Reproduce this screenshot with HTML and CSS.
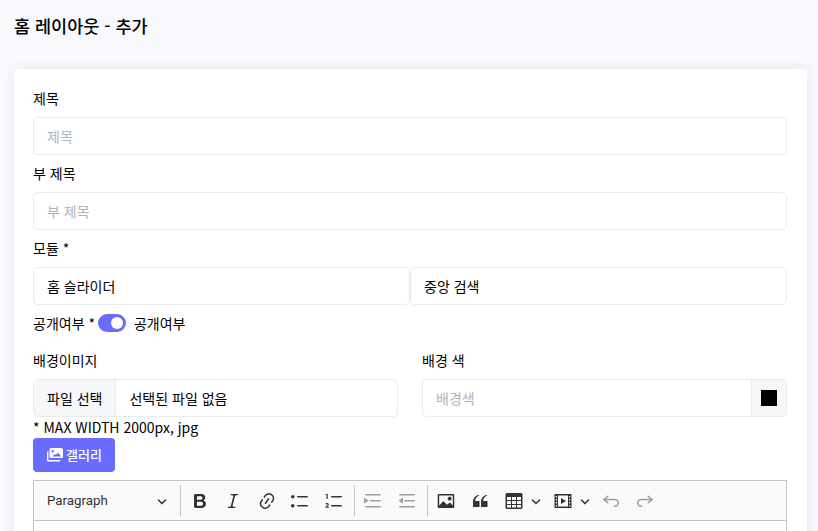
FILE: index.html
```html
<!DOCTYPE html>
<html lang="ko">
<head>
<meta charset="utf-8">
<title>홈 레이아웃 - 추가</title>
<link rel="stylesheet" href="styles.css">
</head>
<body>
<h1 class="page-title">홈 레이아웃 - 추가</h1>
<main class="card">
  <div class="field">
    <label class="label">제목</label>
    <input class="control" type="text" placeholder="제목">
  </div>
  <div class="field">
    <label class="label">부 제목</label>
    <input class="control" type="text" placeholder="부 제목">
  </div>
  <div class="field">
    <label class="label">모듈 *</label>
    <div class="split">
      <div class="control">홈 슬라이더</div>
      <div class="control">중앙 검색</div>
    </div>
  </div>
  <div class="switch-row">
    <span>공개여부 *</span>
    <span class="switch"><span class="knob"></span></span>
    <span>공개여부</span>
  </div>
  <div class="columns">
    <div class="col">
      <label class="label">배경이미지</label>
      <div class="control group">
        <span class="addon addon-left">파일 선택</span>
        <span class="group-text">선택된 파일 없음</span>
      </div>
    </div>
    <div class="col">
      <label class="label">배경 색</label>
      <div class="control group">
        <span class="group-text placeholder">배경색</span>
        <span class="addon addon-right"><span class="swatch"></span></span>
      </div>
    </div>
  </div>
  <div class="hint">* MAX WIDTH 2000px, jpg</div>
  <button class="gallery" type="button">
    <svg class="gallery-icon" viewBox="0 0 16 14"><path fill="currentColor" d="M4 0h10.5A1.5 1.5 0 0 1 16 1.5v7a1.5 1.5 0 0 1-1.500 1.500H4a1.500 1.500 0 0 1-1.500-1.500v-7A1.500 1.500 0 0 1 4 0zm1.300 8.500h8.900L11 4.700 8.700 7 7.600 5.900zM5.700 2A1.200 1.200 0 1 0 5.700 4.400 1.200 1.200 0 0 0 5.700 2z" fill-rule="evenodd"/><path fill="currentColor" d="M0 4.500A1.500 1.500 0 0 1 1.400 3v8.200c0 .5.400.9.900.9h11.200a1.500 1.500 0 0 1-1.400 1.400H1.500A1.500 1.500 0 0 1 0 12z"/></svg>
    <span>갤러리</span>
  </button>
  <div class="editor">
    <div class="toolbar">
      <div class="heading-select">
        <span>Paragraph</span>
        <svg class="caret" viewBox="0 0 10 10"><path d="M.941 4.523a.75.75 0 1 1 1.06-1.06l3.006 3.005 3.005-3.005a.75.75 0 1 1 1.06 1.06l-3.549 3.55a.75.75 0 0 1-1.168-.136L.941 4.523z"/></svg>
      </div>
      <span class="sep"></span>
      <span class="tool"><svg viewBox="0 0 20 20"><path d="M10.187 17H5.773c-.637 0-1.092-.138-1.364-.415-.273-.277-.409-.718-.409-1.323V4.738c0-.617.14-1.062.419-1.332.279-.27.73-.406 1.354-.406h4.68c.69 0 1.288.041 1.793.124.506.083.96.242 1.36.478.341.197.644.447.906.75a3.262 3.262 0 0 1 .808 2.162c0 1.401-.722 2.426-2.167 3.075C15.05 10.175 16 11.315 16 13.01a3.756 3.756 0 0 1-2.296 3.504 6.1 6.1 0 0 1-1.517.377c-.571.073-1.238.11-2 .11zm-.217-6.217H7v4.087h3.069c1.977 0 2.965-.69 2.965-2.072 0-.707-.256-1.22-.768-1.537-.512-.319-1.277-.478-2.296-.478zM7 5.13v3.619h2.606c.729 0 1.292-.067 1.69-.2a1.6 1.6 0 0 0 .91-.765c.165-.267.247-.566.247-.897 0-.707-.26-1.176-.778-1.409-.519-.232-1.31-.348-2.375-.348H7z"/></svg></span>
      <span class="tool"><svg viewBox="0 0 20 20"><path d="m9.586 14.633.021.004c-.036.335.095.655.393.962.082.083.173.15.274.201h1.474a.6.6 0 1 1 0 1.2H5.304a.6.6 0 0 1 0-1.2h1.15c.474-.07.809-.182 1.005-.334.157-.122.291-.32.404-.597l2.416-9.55a1.053 1.053 0 0 0-.281-.823 1.12 1.12 0 0 0-.442-.296H8.15a.6.6 0 0 1 0-1.2h6.443a.6.6 0 1 1 0 1.200h-1.195c-.376.056-.65.155-.823.296-.215.175-.423.439-.623.79l-2.366 9.347z"/></svg></span>
      <span class="tool"><svg viewBox="0 0 20 20"><path d="m11.077 15 .991-1.416a.75.75 0 1 1 1.229.86l-1.148 1.64a.748.748 0 0 1-.217.206 5.251 5.251 0 0 1-8.503-5.955.741.741 0 0 1 .12-.274l1.147-1.639a.75.75 0 1 1 1.228.86L4.933 10.7l.006.003a3.75 3.75 0 0 0 6.132 4.294l.006.004zm5.494-5.335a.748.748 0 0 1-.12.274l-1.147 1.639a.75.75 0 1 1-1.228-.86l.86-1.23a3.75 3.75 0 0 0-6.144-4.301l-.86 1.229a.75.75 0 0 1-1.229-.86l1.148-1.64a.748.748 0 0 1 .217-.206 5.251 5.251 0 0 1 8.503 5.955zm-4.563-2.532a.75.75 0 0 1 .184 1.045l-3.155 4.505a.75.75 0 1 1-1.229-.86l3.155-4.506a.75.75 0 0 1 1.045-.184z"/></svg></span>
      <span class="tool"><svg viewBox="0 0 20 20"><path d="M7 5.75c0 .414.336.75.75.75h9.5a.75.75 0 1 0 0-1.5h-9.5a.75.75 0 0 0-.75.75zm-6 0C1 4.784 1.777 4 2.75 4c.966 0 1.75.777 1.75 1.750 0 .966-.777 1.75-1.75 1.75C1.784 7.5 1 6.723 1 5.75zm6 9c0 .414.336.75.75.75h9.5a.75.75 0 1 0 0-1.5h-9.5a.75.75 0 0 0-.75.75zm-6 0c0-.966.777-1.75 1.75-1.75.966 0 1.75.777 1.75 1.75 0 .966-.777 1.75-1.750 1.750-.966 0-1.75-.777-1.75-1.75z"/></svg></span>
      <span class="tool"><svg viewBox="0 0 20 20"><path d="M7 5.750c0 .414.336.75.75.75h9.5a.75.75 0 1 0 0-1.500h-9.500a.75.75 0 0 0-.75.75zm0 9c0 .414.336.75.75.75h9.500a.75.75 0 1 0 0-1.500h-9.500a.75.75 0 0 0-.75.75z"/><path d="M2.200 2.900h1.500v5H2.500V4H1.600V3.300z"/><path d="M1.300 13.300c.2-1 1-1.400 1.800-1.400 1 0 1.700.6 1.700 1.500 0 .7-.4 1.200-1 1.700l-.8.700h1.900v1H1.300v-.9l1.600-1.500c.5-.4.700-.7.700-1 0-.3-.2-.5-.5-.5-.4 0-.6.200-.7.600z"/></svg></span>
      <span class="sep"></span>
      <span class="tool off"><svg viewBox="0 0 20 20"><path d="M2 3.75c0 .414.336.75.75.75h14.5a.75.75 0 1 0 0-1.5H2.750a.75.75 0 0 0-.75.75zm5 6c0 .414.336.75.75.75h9.500a.75.75 0 1 0 0-1.500h-9.500a.75.75 0 0 0-.75.75zM2.750 16.500h14.500a.75.75 0 1 0 0-1.500H2.750a.75.75 0 1 0 0 1.500zM1.632 6.950 5.020 9.358a.4.4 0 0 1-.013.661l-3.390 2.207A.4.4 0 0 1 1 11.892V7.275a.4.4 0 0 1 .632-.326z"/></svg></span>
      <span class="tool off"><svg viewBox="0 0 20 20"><path d="M2 3.750c0 .414.336.75.75.75h14.500a.75.75 0 1 0 0-1.500H2.750a.75.75 0 0 0-.75.75zm5 6c0 .414.336.75.75.75h9.500a.75.75 0 1 0 0-1.500h-9.500a.75.75 0 0 0-.75.75zM2.750 16.500h14.500a.75.75 0 1 0 0-1.500H2.750a.75.750 0 1 0 0 1.500zM5.370 6.950 1.980 9.358a.4.4 0 0 0 .013.661l3.390 2.207A.4.4 0 0 0 6 11.892V7.275a.4.4 0 0 0-.63-.326z"/></svg></span>
      <span class="sep"></span>
      <span class="tool"><svg viewBox="0 0 20 20"><path d="M6.910 10.540c.26-.23.64-.21.88.03l3.360 3.140 2.230-2.060a.64.64 0 0 1 .87 0l2.520 2.970V4.500H3.200v10.120l3.710-4.080zm10.270-7.510c.6 0 1.090.47 1.090 1.050v11.840c0 .59-.49 1.060-1.090 1.060H2.790c-.6 0-1.090-.47-1.090-1.060V4.080c0-.58.49-1.050 1.100-1.050h14.380zm-5.220 5.560a1.960 1.960 0 1 1 3.400-1.960 1.960 1.960 0 0 1-3.400 1.960z"/></svg></span>
      <span class="tool"><svg viewBox="0 0 20 20"><path d="M3 10.423a6.500 6.500 0 0 1 6.056-6.408l.038.67C6.448 5.423 5.354 7.663 5.220 10H9c.552 0 .5.432.5.986v4.511c0 .554-.448.503-1 .503h-5c-.552 0-.5-.449-.5-1.003v-4.574zm8 0a6.500 6.500 0 0 1 6.056-6.408l.038.67c-2.646.739-3.740 2.979-3.873 5.315H17c.552 0 .5.432.5.986v4.511c0 .554-.448.503-1 .503h-5c-.552 0-.5-.449-.5-1.003v-4.574z"/></svg></span>
      <span class="tool wide"><svg viewBox="0 0 20 20"><path fill-rule="evenodd" d="M3 2h14a1.500 1.500 0 0 1 1.500 1.500v13A1.500 1.500 0 0 1 17 18H3a1.500 1.500 0 0 1-1.500-1.500v-13A1.500 1.500 0 0 1 3 2zm0 4v3h4V6zm5 0v3h4V6zm5 0v3h4V6zM3 10v3h4v-3zm5 0v3h4v-3zm5 0v3h4v-3zM3 14v2.500h4V14zm5 0v2.500h4V14zm5 0v2.500h4V14z"/></svg><svg class="caret-small" viewBox="0 0 10 10"><path d="M.941 4.523a.75.75 0 1 1 1.06-1.06l3.006 3.005 3.005-3.005a.75.75 0 1 1 1.06 1.06l-3.549 3.55a.75.75 0 0 1-1.168-.136L.941 4.523z"/></svg></span>
      <span class="tool wide"><svg viewBox="0 0 20 20"><path fill-rule="evenodd" d="M1.500 3h17v14h-17zM5 4.500v11h10v-11zM2.800 5v1.500h1.200V5zm0 3v1.500h1.200V8zm0 3v1.500h1.200V11zm0 3v1.500h1.200V14zM16 5v1.500h1.200V5zm0 3v1.500h1.200V8zm0 3v1.500h1.200V11zm0 3v1.500h1.200V14zM8 7l5 3-5 3z"/></svg><svg class="caret-small" viewBox="0 0 10 10"><path d="M.941 4.523a.75.75 0 1 1 1.06-1.06l3.006 3.005 3.005-3.005a.75.75 0 1 1 1.06 1.06l-3.549 3.55a.75.75 0 0 1-1.168-.136L.941 4.523z"/></svg></span>
      <span class="tool off"><svg viewBox="0 0 20 20"><path d="m5.042 9.367 2.189 1.837a.75.75 0 0 1-.965 1.149l-3.788-3.180a.747.747 0 0 1-.21-.284.75.75 0 0 1 .17-.945L6.230 4.762a.75.75 0 1 1 .964 1.150L4.863 7.866h8.917A.75.75 0 0 1 14 7.900a4 4 0 1 1-1.477 7.718l.344-1.489a2.500 2.500 0 1 0 1.094-4.730l.008-.032H5.042z"/></svg></span>
      <span class="tool off"><svg viewBox="0 0 20 20"><path d="m14.958 9.367-2.189 1.837a.75.75 0 0 0 .965 1.149l3.788-3.180a.747.747 0 0 0 .21-.284.75.75 0 0 0-.17-.945L13.770 4.762a.75.75 0 1 0-.964 1.150l2.331 1.955H6.220A.75.75 0 0 0 6 7.900a4 4 0 1 0 1.477 7.718l-.344-1.489A2.500 2.500 0 1 1 6.039 9.400l-.008-.032h8.927z"/></svg></span>
    </div>
    <div class="editor-body"></div>
  </div>
</main>
</body>
</html>
```
FILE: styles.css
```css
* { box-sizing: border-box; }
html, body { height: 100%; }
body {
  margin: 0;
  overflow: hidden;
  background: #f8f9fc;
  color: #000;
  font: 14px/20px "Noto Sans CJK KR", "Noto Sans", sans-serif;
  padding: 0 11px 0 14px;
}
.page-title {
  margin: 0;
  padding-top: 14px;
  height: 69px;
  font-size: 17.5px;
  line-height: 24px;
  font-weight: 500;
}
.card {
  background: #fff;
  border-radius: 4px;
  box-shadow: 0 0 12px rgba(60, 70, 120, .1);
  padding: 19px 20px 0 19px;
  height: 600px;
}
.field { margin-bottom: 8px; }
.label { display: block; margin-bottom: 9px; line-height: 20px; }
.control {
  display: block;
  width: 100%;
  height: 38px;
  padding: 0 13px;
  border: 1px solid #e9ecef;
  border-radius: 5px;
  background: #fff;
  color: #000;
  font: inherit;
  line-height: 36px;
  outline: none;
}
.control::placeholder, .placeholder { color: #adb5bd; opacity: 1; }
.split { display: flex; }
.split .control { flex: 1 1 0; min-width: 0; }
.switch-row { display: flex; align-items: center; height: 20px; margin-top: 8px; }
.switch {
  width: 28px;
  height: 18px;
  margin: 0 8px 0 3px;
  border-radius: 9px;
  background: #696cff;
  display: flex;
  align-items: center;
  justify-content: flex-end;
  padding-right: 3px;
}
.knob { width: 12px; height: 12px; border-radius: 50%; background: #fff; }
.columns { display: grid; grid-template-columns: 1fr 1fr; gap: 24px; margin-top: 17px; }
.group { display: flex; padding: 0; overflow: hidden; }
.addon { background: #f6f7f9; flex: none; height: 100%; }
.addon-left { padding: 0 13px; border-right: 1px solid #e9ecef; }
.addon-right { width: 35px; border-left: 1px solid #e9ecef; display: flex; align-items: center; justify-content: center; }
.group-text { flex: 1; padding: 0 13px; min-width: 0; }
.swatch { width: 16px; height: 16px; background: #000; }
.hint { margin-top: 0; line-height: 21px; }
.gallery {
  display: flex;
  align-items: center;
  gap: 3px;
  width: 82px;
  height: 34px;
  padding: 0 0 0 14px;
  border: 0;
  border-radius: 4px;
  background: #696cff;
  color: #fff;
  white-space: nowrap;
  font: 500 13px/20px "Noto Sans CJK KR", sans-serif;
}
.gallery-icon { width: 16px; height: 14px; flex: none; }
.editor { margin-top: 8px; border: 1px solid #c4c4c4; }
.toolbar {
  display: flex;
  align-items: center;
  height: 40px;
  padding: 0 0 0 13px;
  background: #fafafa;
  border-bottom: 1px solid #c4c4c4;
  color: #333;
  font-family: Roboto, sans-serif;
  font-size: 13.33px;
}
.toolbar svg { fill: currentColor; }
.heading-select {
  width: 130px;
  display: flex;
  align-items: center;
  justify-content: space-between;
  padding-right: 10px;
  flex: none;
}
.caret { width: 10px; height: 10px; }
.sep { width: 1px; height: 31px; background: #c4c4c4; flex: none; margin: 0 2px 0 3px; }
.tool { width: 33.5px; flex: none; display: flex; align-items: center; justify-content: center; }
.tool svg { width: 20px; height: 20px; flex: none; }
.tool.off { opacity: .45; }
.tool.wide { width: auto; padding: 0 0 0 7px; gap: 7px; }
.tool .caret-small { width: 10px; height: 10px; margin-right: 5px; }
.editor-body { height: 200px; background: #fff; }
```
